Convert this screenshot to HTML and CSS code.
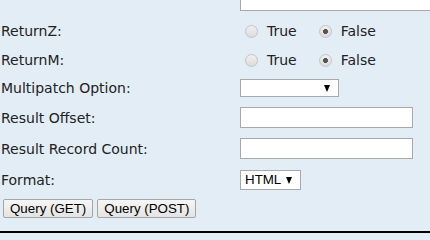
FILE: index.html
```html
<!doctype html>
<html lang="en">
<head>
	<meta charset="UTF-8">
	<title>Query</title>
	<link rel="stylesheet" href="styles.css">
</head>
<body>
	<form id="query" class="form">
		<div class="row r0">
			<label class="lbl"></label>
			<div class="val"><input type="text" class="txt wide"></div>
		</div>
		<div class="row r1">
			<label class="lbl">ReturnZ:</label>
			<div class="val">
				<label class="opt"><input type="radio" name="returnZ" value="true"> True</label>
				<label class="opt"><input type="radio" name="returnZ" value="false" checked> False</label>
			</div>
		</div>
		<div class="row r2">
			<label class="lbl">ReturnM:</label>
			<div class="val">
				<label class="opt"><input type="radio" name="returnM" value="true"> True</label>
				<label class="opt"><input type="radio" name="returnM" value="false" checked> False</label>
			</div>
		</div>
		<div class="row r3">
			<label class="lbl">Multipatch Option:</label>
			<div class="val"><span class="sel multi"><select name="multipatchOption"><option></option></select></span></div>
		</div>
		<div class="row r4">
			<label class="lbl">Result Offset:</label>
			<div class="val"><input type="text" class="txt"></div>
		</div>
		<div class="row r5">
			<label class="lbl">Result Record Count:</label>
			<div class="val"><input type="text" class="txt"></div>
		</div>
		<div class="row r6">
			<label class="lbl">Format:</label>
			<div class="val"><span class="sel fmt"><select name="f"><option>HTML</option></select></span></div>
		</div>
		<div class="btns">
			<button type="button" class="btn get">Query (GET)</button>
			<button type="button" class="btn post">Query (POST)</button>
		</div>
	</form>
	<div class="foot"></div>
</body>
</html>
```

FILE: styles.css
```css
html,body{
	margin: 0;
	padding: 0;
	background: #e3edf6;
	overflow: hidden;
}
body{
	font-family: "DejaVu Sans", Verdana, sans-serif;
	font-size: 14px;
	color: #222;
}
.form{
	margin-top: -16px;
	padding-left: 1px;
}
.row{
	display: flex;
	align-items: center;
}
.r0{height: 32px;}
.r1{height: 30px;}
.r2{height: 28px;}
.r3{height: 28px;}
.r4,.r5,.r6{height: 31px;}
.lbl{
	width: 239px;
	flex: none;
}
.val{
	display: flex;
	align-items: center;
}
.txt{
	box-sizing: border-box;
	width: 173px;
	height: 21px;
	margin: 0;
	border: 1px solid #a9a9a9;
	background: #fff;
	font-family: "Liberation Sans", Arial, sans-serif;
	font-size: 13px;
}
.txt.wide{
	width: 260px;
}
.opt{
	display: flex;
	align-items: center;
	margin-right: 17px;
}
.opt input{
	-webkit-appearance: none;
	appearance: none;
	box-sizing: border-box;
	width: 13px;
	height: 13px;
	margin: 0 9px 0 5px;
	border: 1px solid #c4c4c4;
	border-radius: 50%;
	background: linear-gradient(#f0f0f0, #dcdcdc);
}
.opt input:checked{
	background: radial-gradient(circle, #555 0, #555 2.2px, transparent 2.8px), linear-gradient(#f0f0f0, #dcdcdc);
}
.sel{
	position: relative;
	display: inline-block;
}
.sel select{
	-webkit-appearance: none;
	appearance: none;
	box-sizing: border-box;
	margin: 0;
	padding: 0 0 0 4px;
	border: 1px solid #a9a9a9;
	border-radius: 0;
	background: #fff;
	font-family: "Liberation Sans", Arial, sans-serif;
	font-size: 13.33px;
	color: #000;
}
.multi select{
	width: 99px;
	height: 18px;
}
.fmt select{
	width: 61px;
	height: 20px;
}
.sel::after{
	content: "";
	position: absolute;
	right: 9px;
	top: 50%;
	margin-top: -3px;
	border-left: 3.5px solid transparent;
	border-right: 3.5px solid transparent;
	border-top: 7px solid #000;
	pointer-events: none;
}
.btns{
	height: 36px;
	padding-left: 2px;
	box-sizing: border-box;
	padding-top: 4px;
	display: flex;
	gap: 4px;
	align-items: flex-start;
}
.btn{
	height: 19px;
	margin: 0;
	padding: 0 6px;
	border: 1px solid #a6a6a6;
	border-radius: 2px;
	background: linear-gradient(#f6f6f6, #e4e4e4);
	font-family: "Liberation Sans", Arial, sans-serif;
	font-size: 13.33px;
	color: #000;
}
.foot{
	border-top: 2px solid #000;
}
```
